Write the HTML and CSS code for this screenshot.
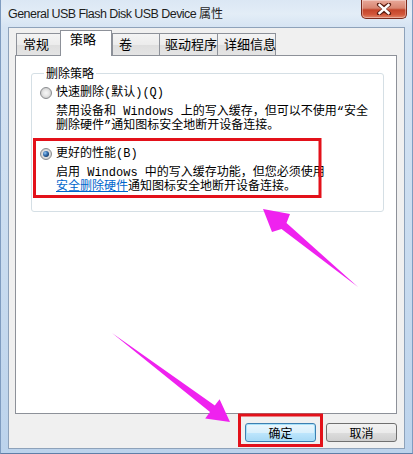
FILE: index.html
```html
<!DOCTYPE html>
<html lang="zh-CN">
<head>
<meta charset="utf-8">
<title>属性</title>
<link rel="stylesheet" href="styles.css">
</head>
<body>
<div class="window">
  <div class="titlebar">
    <span class="title">General USB Flash Disk USB Device <span class="title-cjk">属性</span></span>
    <button class="close" aria-label="关闭">
      <svg width="16" height="12" viewBox="0 0 16 12"><path d="M3 1.5 L8 5 L13 1.5 M3 10.5 L8 7 L13 10.5 M8 5 L8 7" stroke="#5a1c10" stroke-width="4.2" fill="none" stroke-linecap="round"/><path d="M3.5 2 L12.5 10 M12.5 2 L3.5 10" stroke="#ffffff" stroke-width="2.4" fill="none" stroke-linecap="square"/></svg>
    </button>
  </div>
  <div class="client">
    <div class="tabs">
      <div class="tab t1">常规</div>
      <div class="tab t2 active">策略</div>
      <div class="tab t3">卷</div>
      <div class="tab t4">驱动程序</div>
      <div class="tab t5">详细信息</div>
    </div>
    <div class="panel">
      <fieldset class="group">
        <legend>删除策略</legend>
        <div class="option">
          <span class="radio"></span>
          <div class="opt-body">
            <div class="opt-label">快速删除(默认)(Q)</div>
            <div class="opt-desc">禁用设备和 Windows 上的写入缓存，但可以不使用“安全<br>删除硬件”通知图标安全地断开设备连接。</div>
          </div>
        </div>
        <div class="option second">
          <span class="radio checked"></span>
          <div class="opt-body">
            <div class="opt-label">更好的性能(B)</div>
            <div class="opt-desc">启用 Windows 中的写入缓存功能，但您必须使用<br><span class="link">安全删除硬件</span>通知图标安全地断开设备连接。</div>
          </div>
        </div>
      </fieldset>
    </div>
    <div class="buttons">
      <button class="btn default">确定</button>
      <button class="btn">取消</button>
    </div>
  </div>
</div>
<svg class="annot" width="413" height="454" viewBox="0 0 413 454">
  <rect x="34.5" y="139.5" width="285.5" height="57" fill="none" stroke="#e3111a" stroke-width="3"/>
  <rect x="239.5" y="415" width="82" height="30.5" fill="none" stroke="#e3111a" stroke-width="3"/>
  <polygon points="263,209 290,214 286.5,223 358,287 281.5,229 272,232" fill="#ef22ef"/>
  <polygon points="230,422 219.6,399.2 214.8,405.6 112,333 210,412 205.2,418.4" fill="#ef22ef"/>
</svg>
</body>
</html>
```
FILE: styles.css
```css
html, body {
  margin: 0;
  padding: 0;
}
body {
  width: 413px;
  height: 454px;
  overflow: hidden;
  position: relative;
  background: linear-gradient(90deg, #9fbde0 0px, #c9dcf0 4px, #d4e3f3 50%, #c9dcf0 calc(100% - 4px), #9fbde0 100%);
  font-family: "Noto Sans CJK SC", sans-serif;
}
.window {
  width: 413px;
  height: 454px;
  box-sizing: border-box;
  padding: 0 7px 4px 7px;
  display: flex;
  flex-direction: column;
  background: linear-gradient(180deg, #dbe7f4 0px, #e3edf7 14px, #d6e4f3 27px, #c8dbef 60%, #bcd3ec 100%);
  border-left: 1px solid #7f9cc0;
  border-right: 1px solid #7f9cc0;
  border-bottom: 1px solid #5f7fa8;
}
.titlebar {
  height: 27px;
  display: flex;
  align-items: flex-start;
  justify-content: space-between;
  margin: 0 -1px 0 0;
}
.title {
  font-family: "Liberation Sans", "Noto Sans CJK SC", sans-serif;
  font-size: 12.5px;
  letter-spacing: -0.55px;
  line-height: 16px;
  margin-top: 6px;
  color: #1e1e1e;
  white-space: nowrap;
}
.title-cjk {
  letter-spacing: 0;
  font-size: 12px;
}
.close {
  width: 46px;
  height: 19px;
  margin: 0 -1px 0 0;
  padding: 0;
  border: 1px solid #7a2a1c;
  border-top: none;
  border-radius: 0 0 5px 5px;
  background: linear-gradient(180deg, #e9a99a 0%, #d88571 45%, #c4452a 55%, #d2573a 80%, #e1876b 100%);
  box-shadow: inset 0 0 0 1px rgba(255,255,255,0.35);
  display: flex;
  align-items: center;
  justify-content: center;
}
.client {
  flex: 1;
  background: #f0f0f0;
  border: 1px solid #8ea2ba;
  display: flex;
  flex-direction: column;
  padding: 2px 7px 0 6px;
}
.tabs {
  display: flex;
  align-items: flex-end;
  height: 25px;
  padding-left: 1px;
  position: relative;
  z-index: 2;
  font-size: 13px;
}
.tab {
  box-sizing: border-box;
  height: 22px;
  line-height: 20px;
  padding-left: 6px;
  border: 1px solid #8d9199;
  border-bottom: none;
  margin-right: -1px;
  background: linear-gradient(180deg, #f4f4f4 0%, #ececec 50%, #dedede 51%, #e4e4e4 100%);
  color: #000;
  white-space: nowrap;
}
.t1 { width: 47px; }
.t2 { width: 52px; }
.t3 { width: 48px; margin-left: 2px; }
.t4 { width: 59px; padding-left: 5px; }
.t5 { width: 59px; padding-left: 6px; }
.tab.active {
  height: 26px;
  margin: 0 -2px -1px -2px;
  background: #ffffff;
  line-height: 16px;
  padding-left: 9px;
  position: relative;
  z-index: 3;
}
.panel {
  height: 359px;
  box-sizing: border-box;
  background: #ffffff;
  border: 1px solid #8d9199;
  padding: 10px 12px 0 15px;
  position: relative;
  z-index: 1;
}
.group {
  margin: 0;
  border: 1px solid #d5dfe5;
  border-radius: 3px;
  padding: 6px 0 17px 8px;
  font-family: "Liberation Mono", "Noto Sans CJK SC", monospace;
  font-size: 12px;
  line-height: 14px;
  color: #000;
}
.group legend {
  padding: 0 2px;
  margin-left: 4px;
  font-family: "Noto Sans CJK SC", sans-serif;
  line-height: 14px;
}
.option {
  display: flex;
  align-items: flex-start;
  white-space: nowrap;
}
.option.second {
  margin-top: 14px;
}
.radio {
  box-sizing: border-box;
  width: 12px;
  height: 12px;
  margin-top: 1px;
  margin-right: 4px;
  border-radius: 50%;
  border: 1px solid #8a8c8f;
  background: radial-gradient(circle at 50% 50%, #f7f7f7 0px, #e6e6e6 3px, #d0d0d0 5px, #f2f2f2 6px);
  display: flex;
  align-items: center;
  justify-content: center;
  flex: none;
}
.radio.checked::after {
  content: "";
  width: 6px;
  height: 6px;
  border-radius: 50%;
  background: radial-gradient(circle at 35% 35%, #9bc8f2 0px, #3c78b8 2px, #173e6e 4px);
}
.opt-desc {
  margin-top: 5px;
}
.link {
  color: #0066cc;
  text-decoration: underline;
}
.buttons {
  display: flex;
  justify-content: flex-end;
  gap: 10px;
  margin-top: 9px;
}
.btn {
  width: 71px;
  height: 19px;
  padding: 0;
  box-sizing: border-box;
  border: 1px solid #707070;
  border-radius: 3px;
  background: linear-gradient(180deg, #f2f2f2 0%, #ebebeb 50%, #dddddd 51%, #cfcfcf 100%);
  font-family: "Noto Sans CJK SC", sans-serif;
  font-size: 12px;
  line-height: 16px;
  color: #000;
}
.btn.default {
  border-color: #3c7fb1;
  background: linear-gradient(180deg, #eaf6fd 0%, #d9f0fc 50%, #bee6fd 51%, #a7d9f5 100%);
  box-shadow: inset 0 0 0 1px #a8e1f9;
}
.annot {
  position: absolute;
  left: 0;
  top: 0;
  pointer-events: none;
  z-index: 10;
}
```
